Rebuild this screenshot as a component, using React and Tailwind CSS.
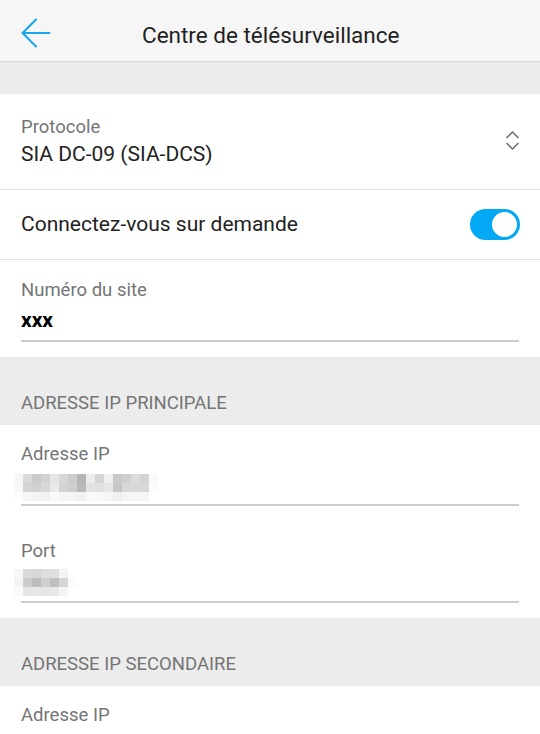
import { ArrowLeft } from "lucide-react"

const ipMosaic = [
  ["#f6f6f6", "#dadada", "#cbcbcb", "#d2d2d2", "#e6e6e6", "#d6d6d6", "#cccccc", "#b5b5b5", "#ededed", "#d5d5d5", "#f0f0f0", "#c9c9c9", "#cfcfcf", "#dcdcdc", "#d3d3d3", "#fafafa"],
  ["#f8f8f8", "#d4d4d4", "#d0d0d0", "#d8d8d8", "#e8e8e8", "#d2d2d2", "#cdcdcd", "#b9b9b9", "#e2e2e2", "#e0e0e0", "#e6e6e6", "#c6c6c6", "#d8d8d8", "#d8d8d8", "#d8d8d8", "#fcfcfc"],
  ["#fdfdfd", "#f5f5f5", "#f4f4f4", "#f1f1f1", "#f9f9f9", "#f5f5f5", "#f4f4f4", "#f1f1f1", "#f9f9f9", "#f8f8f8", "#f5f5f5", "#f0f0f0", "#f5f5f5", "#f5f5f5", "#f5f5f5", "#ffffff"],
]

const portMosaic = [
  ["#f6f6f6", "#dadada", "#d6d6d6", "#dcdcdc", "#dedede", "#f4f4f4", "#ffffff"],
  ["#f4f4f4", "#cccccc", "#bdbdbd", "#cfcfcf", "#bfbfbf", "#d6d6d6", "#fbfbfb"],
  ["#fafafa", "#e6e6e6", "#e8e8e8", "#e4e4e4", "#e8e8e8", "#f4f4f4", "#ffffff"],
]

export default function App() {
  return (
    <div className="h-[734px] w-[540px] overflow-hidden bg-white font-['Roboto','Liberation_Sans',sans-serif] text-[#222]">
      <header className="relative z-10 flex h-[61px] items-center bg-[#f6f6f6] shadow-[0_1px_1px_rgba(0,0,0,0.08)]">
        <ArrowLeft className="ml-[13px] mt-[4px] size-[46px] text-[#1ba6ec]" strokeWidth={1.1} />
        <h1 className="ml-[83px] mt-[8px] text-[22.5px] leading-[28px] text-[#222]">Centre de télésurveillance</h1>
      </header>

      <div className="h-[33px] bg-[#ececec]" />

      <div className="flex h-[96px] justify-between border-b border-[#e2e2e2] pl-[21px] pr-[20px] pt-[21px]">
        <div>
          <Label>Protocole</Label>
          <p className="mt-[2px] text-[21px] leading-[26px]">SIA DC-09 (SIA-DCS)</p>
        </div>
        <svg className="mt-[15px]" width="15" height="21" viewBox="0 0 15 21" fill="none" stroke="#666" strokeWidth="1.4">
          <path d="M1.5 8 L7.5 2 L13.5 8" />
          <path d="M1.5 13 L7.5 19 L13.5 13" />
        </svg>
      </div>

      <div className="flex h-[70px] items-center justify-between border-b border-[#e2e2e2] pl-[21px] pr-[20px]">
        <p className="text-[21px]">Connectez-vous sur demande</p>
        <span className="flex h-[31px] w-[50px] items-center justify-end rounded-full bg-[#03a9f4] px-[3px]">
          <span className="size-[25px] rounded-full bg-white" />
        </span>
      </div>

      <div className="h-[97px] px-[21px] pt-[18px]">
        <Label>Numéro du site</Label>
        <p className="mt-[5px] text-[21px] font-bold leading-[26px] text-black">xxx</p>
        <div className="mt-[7px] h-[2px] bg-[#cdcdcd]" />
      </div>

      <SectionTitle>ADRESSE IP PRINCIPALE</SectionTitle>

      <div className="h-[193px] px-[21px] pt-[17px]">
        <Label>Adresse IP</Label>
        <Mosaic rows={ipMosaic} className="mt-[8px]" />
        <div className="mt-[3px] h-[2px] bg-[#cdcdcd]" />

        <div className="mt-[33px]">
          <Label>Port</Label>
          <Mosaic rows={portMosaic} className="mt-[6px]" />
          <div className="mt-[5px] h-[2px] bg-[#cdcdcd]" />
        </div>
      </div>

      <SectionTitle>ADRESSE IP SECONDAIRE</SectionTitle>

      <div className="px-[21px] pt-[17px]">
        <Label>Adresse IP</Label>
      </div>
    </div>
  )
}

function Label({ children }) {
  return <p className="text-[18.5px] leading-[24px] text-[#757575]">{children}</p>
}

function SectionTitle({ children }) {
  return (
    <div className="flex h-[68px] items-end bg-[#ececec] px-[21px] pb-[11px]">
      <p className="text-[18.5px] leading-[22px] text-[#757575]">{children}</p>
    </div>
  )
}

function Mosaic({ rows, className }) {
  return (
    <div className={`-ml-[7px] flex flex-col ${className}`}>
      {rows.map((row, i) => (
        <div key={i} className="flex">
          {row.map((color, j) => (
            <span key={j} className="h-[9px] w-[9px]" style={{ backgroundColor: color }} />
          ))}
        </div>
      ))}
    </div>
  )
}
